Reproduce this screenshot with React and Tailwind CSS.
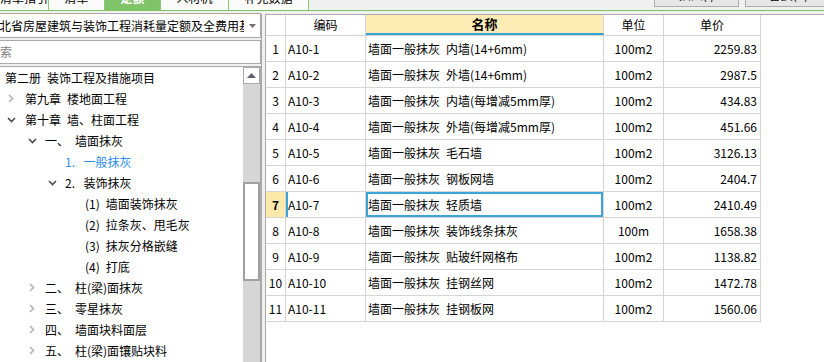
const tabs = [
    { name: '清单指引', w: 'w-[57px]', ml: '-ml-[8px] pl-[8px]' },
    { name: '清单', w: 'w-[56px]' },
    { name: '定额', w: 'w-[56px]', active: true },
    { name: '人材机', w: 'w-[68px]' },
    { name: '补充数据', w: 'w-[80px]' },
];

// \u2002 = en space, close to the half-width blank of the original font
const tree = [
    { t: '第二册\u2002装饰工程及措施项目', pad: 'pl-[5px]' },
    { t: '第九章\u2002楼地面工程', chev: 'right', pad: 'pl-[8px]', cw: 'w-[17px]' },
    { t: '第十章\u2002墙、柱面工程', chev: 'down', pad: 'pl-[7px]', cw: 'w-[18px]' },
    { t: '一、\u2002墙面抹灰', chev: 'down', pad: 'pl-[28px]', cw: 'w-[17px]' },
    { t: '1.\u2002\u2009一般抹灰', pad: 'pl-[65px]', blue: true },
    { t: '2.\u2002\u2009装饰抹灰', chev: 'down', pad: 'pl-[48px]', cw: 'w-[17px]' },
    { t: '(1)\u2002墙面装饰抹灰', pad: 'pl-[85px]' },
    { t: '(2)\u2002拉条灰、甩毛灰', pad: 'pl-[85px]' },
    { t: '(3)\u2002抹灰分格嵌缝', pad: 'pl-[85px]' },
    { t: '(4)\u2002打底', pad: 'pl-[85px]' },
    { t: '二、\u2002柱(梁)面抹灰', chev: 'right', pad: 'pl-[29px]', cw: 'w-[16px]' },
    { t: '三、\u2002零星抹灰', chev: 'right', pad: 'pl-[29px]', cw: 'w-[16px]' },
    { t: '四、\u2002墙面块料面层', chev: 'right', pad: 'pl-[29px]', cw: 'w-[16px]' },
    { t: '五、\u2002柱(梁)面镶贴块料', chev: 'right', pad: 'pl-[29px]', cw: 'w-[16px]' },
];

const rows = [
    ['A10-1', '墙面一般抹灰\u2002内墙(14+6mm)', '100m2', '2259.83'],
    ['A10-2', '墙面一般抹灰\u2002外墙(14+6mm)', '100m2', '2987.5'],
    ['A10-3', '墙面一般抹灰\u2002内墙(每增减5mm厚)', '100m2', '434.83'],
    ['A10-4', '墙面一般抹灰\u2002外墙(每增减5mm厚)', '100m2', '451.66'],
    ['A10-5', '墙面一般抹灰\u2002毛石墙', '100m2', '3126.13'],
    ['A10-6', '墙面一般抹灰\u2002钢板网墙', '100m2', '2404.7'],
    ['A10-7', '墙面一般抹灰\u2002轻质墙', '100m2', '2410.49'],
    ['A10-8', '墙面一般抹灰\u2002装饰线条抹灰', '100m', '1658.38'],
    ['A10-9', '墙面一般抹灰\u2002贴玻纤网格布', '100m2', '1138.82'],
    ['A10-10', '墙面一般抹灰\u2002挂钢丝网', '100m2', '1472.78'],
    ['A10-11', '墙面一般抹灰\u2002挂钢板网', '100m2', '1560.06'],
];

function Chevron({ dir }) {
    if (dir === 'down') {
        return (
            <svg width="9" height="6" viewBox="0 0 9 6">
                <polyline points="1,1 4.5,4.5 8,1" fill="none" stroke="#4a4a4a" strokeWidth="1.6" />
            </svg>
        );
    }
    return (
        <svg width="6" height="9" viewBox="0 0 6 9">
            <polyline points="1,1 4.5,4.5 1,8" fill="none" stroke="#b4b4b4" strokeWidth="1.6" />
        </svg>
    );
}

export default function App() {
    return (
        <div className="w-[824px] h-[362px] overflow-hidden bg-[#f0f0f0] flex flex-col text-[12px] text-black font-['Noto_Sans_CJK_SC','Liberation_Sans',sans-serif]">
            {/* Top tab strip (mostly scrolled off) */}
            <div className="h-[10px] overflow-hidden flex items-start shrink-0">
                {tabs.map((tab) => (
                    <div
                        key={tab.name}
                        className={`${tab.w} ${tab.ml || ''} h-[26px] -mt-[15px] flex items-center justify-center border-r border-[#8cc97a] ${tab.active ? 'bg-[#80c46a] text-white font-bold' : 'bg-[#fafafa]'}`}
                    >
                        {tab.name}
                    </div>
                ))}
                <div className="ml-auto flex gap-[6px] -mr-[8px]">
                    <div className="w-[85px] h-[24px] -mt-[17px] border border-[#adadad] bg-[#e6e6e6] flex items-center justify-center">插入(I)</div>
                    <div className="w-[87px] h-[24px] -mt-[17px] border border-[#adadad] bg-[#e6e6e6] flex items-center justify-center">替换(R)</div>
                </div>
            </div>
            <div className="h-px bg-[#7cc45e] shrink-0" />

            <div className="flex-1 flex pt-[2px] min-h-0">
                {/* Left panel */}
                <div className="w-[261px] flex flex-col shrink-0">
                    <div className="h-[25px] bg-white border border-l-0 border-[#a9a9a9] flex items-center overflow-hidden">
                        <div className="w-[244px] overflow-hidden whitespace-nowrap">
                            <span className="block -ml-[13px]">湖北省房屋建筑与装饰工程消耗量定额及全费用基价表</span>
                        </div>
                        <div className="flex-1 flex justify-center">
                            <svg width="7" height="4" viewBox="0 0 7 4">
                                <polygon points="0,0 7,0 3.5,4" fill="#707070" />
                            </svg>
                        </div>
                    </div>
                    <div className="h-[24px] mt-[2px] bg-white border border-l-0 border-[#a9a9a9] flex items-center overflow-hidden">
                        <span className="-ml-[12px] text-[#808080]">搜索</span>
                    </div>
                    <div className="flex-1 mt-[2px] bg-white border border-l-0 border-b-0 border-[#a9a9a9] flex min-h-0">
                        <div className="flex-1 flex flex-col overflow-hidden">
                            {tree.map((node) => (
                                <div key={node.t} className={`h-[21px] shrink-0 flex items-center whitespace-pre ${node.pad}`}>
                                    {node.chev && (
                                        <div className={`${node.cw} flex items-center`}>
                                            <Chevron dir={node.chev} />
                                        </div>
                                    )}
                                    <span className={node.blue ? 'text-[#2b8ef0]' : ''}>{node.t}</span>
                                </div>
                            ))}
                        </div>
                        {/* Scrollbar */}
                        <div className="w-[17px] flex flex-col bg-[#d6d6d6] shrink-0">
                            <div className="h-[17px] bg-white border border-[#a9a9a9] flex items-center justify-center">
                                <svg width="9" height="5" viewBox="0 0 9 5">
                                    <polygon points="0,5 9,5 4.5,0" fill="#606070" />
                                </svg>
                            </div>
                            <div className="h-[98px]" />
                            <div className="h-[99px] bg-white border-2 border-[#a0a0a0]" />
                        </div>
                    </div>
                </div>

                {/* Splitter */}
                <div className="w-[4px] border-l border-[#a9a9a9] shrink-0 mt-[1px]" />

                {/* Right panel: quota table */}
                <div className="flex-1 bg-white border-l border-t border-[#a9a9a9] mt-[1px] overflow-hidden">
                    <div className="w-[495px]">
                        <div className="flex h-[21px] border-b border-[#d4d4d4]">
                            <div className="w-[20px] border-r border-[#d4d4d4]" />
                            <div className="w-[80px] border-r border-[#d4d4d4] flex items-center justify-center">编码</div>
                            <div className="w-[238px] border-r border-[#d4d4d4] bg-[#feecb4] border-b-2 border-b-[#3a9fd3] flex items-center justify-center font-bold text-[13px]">名称</div>
                            <div className="w-[60px] border-r border-[#d4d4d4] flex items-center justify-center">单位</div>
                            <div className="w-[97px] border-r border-[#d4d4d4] flex items-center justify-center">单价</div>
                        </div>
                        {rows.map((r, i) => {
                            const sel = i === 6;
                            return (
                                <div key={r[0]} className="flex h-[26px] border-b border-[#d4d4d4]">
                                    <div className={`w-[20px] border-r border-[#d4d4d4] flex items-center justify-center ${sel ? 'bg-[#fde9a9] font-bold' : ''}`}>
                                        {i + 1}
                                    </div>
                                    <div className={`w-[80px] border-r border-[#d4d4d4] flex items-center pl-[2px] ${sel ? 'shadow-[inset_2px_0_0_#3aa5d6]' : ''}`}>
                                        {r[0]}
                                    </div>
                                    <div className={`w-[238px] border-r border-[#d4d4d4] flex items-center pl-[2px] whitespace-pre ${sel ? 'shadow-[inset_0_0_0_2px_#3aa5d6]' : ''}`}>
                                        {r[1]}
                                    </div>
                                    <div className="w-[60px] border-r border-[#d4d4d4] flex items-center justify-center">{r[2]}</div>
                                    <div className="w-[97px] border-r border-[#d4d4d4] flex items-center justify-end pr-[3px]">{r[3]}</div>
                                </div>
                            );
                        })}
                    </div>
                </div>
            </div>
        </div>
    );
}
